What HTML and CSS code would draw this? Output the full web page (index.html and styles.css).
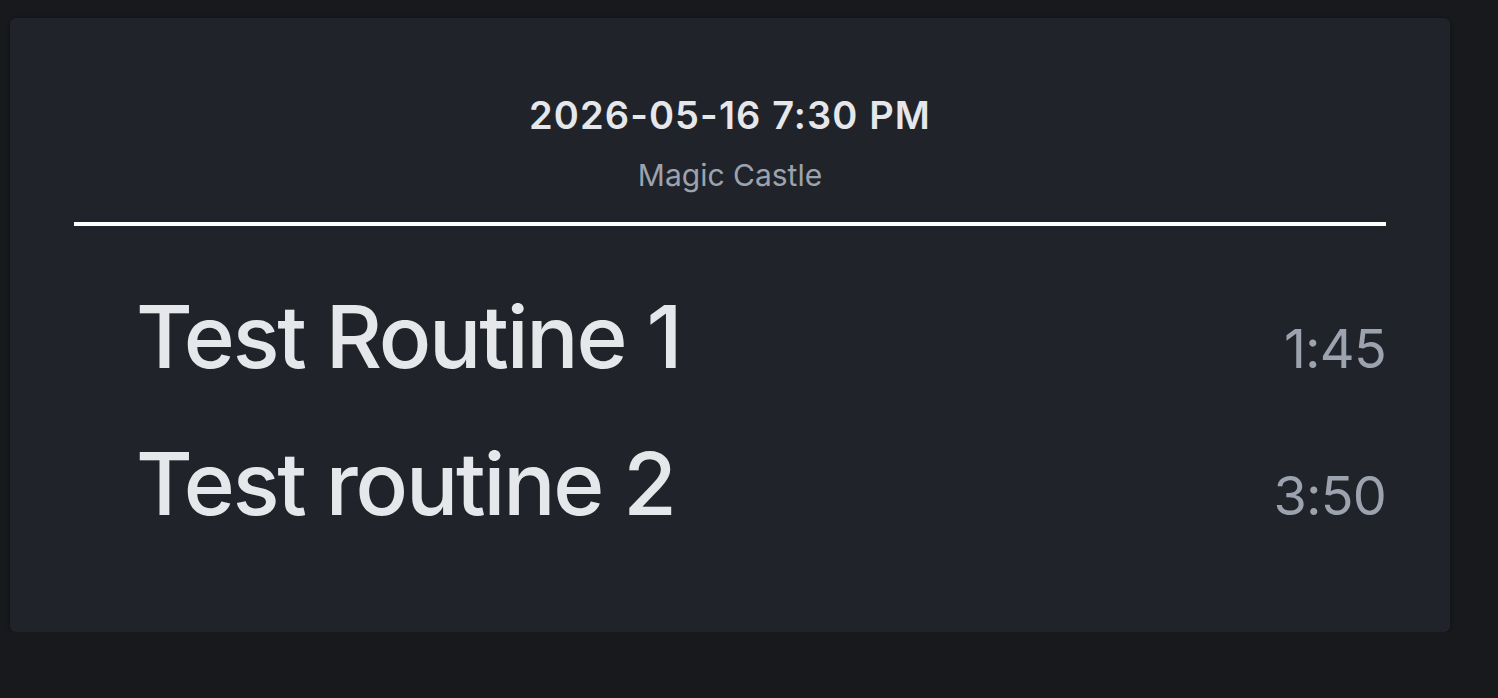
FILE: index.html
```html
<!DOCTYPE html>
<html lang="en">
<head>
<meta charset="utf-8">
<title>Set list</title>
<link rel="stylesheet" href="styles.css">
</head>
<body>
<main class="page">
  <section class="card">
    <header class="card-header">
      <h1 class="show-date">2026-05-16 7:30 PM</h1>
      <p class="venue">Magic Castle</p>
    </header>
    <hr class="divider">
    <ul class="routines">
      <li class="routine">
        <span class="routine-name">Test Routine 1</span>
        <span class="routine-time">1:45</span>
      </li>
      <li class="routine">
        <span class="routine-name">Test routine 2</span>
        <span class="routine-time">3:50</span>
      </li>
    </ul>
  </section>
</main>
</body>
</html>
```
FILE: styles.css
```css
html, body {
  margin: 0;
  padding: 0;
  background: #18191d;
}
body {
  font-family: Inter, "Noto Sans", "Liberation Sans", sans-serif;
  color: #e5e7eb;
}
.page {
  padding: 18px 48px 0 10px;
}
.card {
  background: #20232a;
  border-radius: 6px;
  box-shadow: 0 1px 4px rgba(0, 0, 0, 0.35);
  padding: 75px 64px 105px;
  height: 614px;
  box-sizing: border-box;
}
.card-header {
  display: flex;
  flex-direction: column;
  align-items: center;
}
.show-date {
  margin: 0;
  font-size: 38px;
  line-height: 44px;
  font-weight: 600;
  letter-spacing: 1.1px;
  color: #e5e7eb;
}
.venue {
  margin: 20px 0 0;
  font-size: 30px;
  line-height: 36px;
  color: #9ca3af;
}
.divider {
  margin: 29px 0 0;
  border: 0;
  height: 4px;
  background: #ffffff;
}
.routines {
  list-style: none;
  margin: 67px 0 0;
  padding: 0 0 0 62px;
  display: flex;
  flex-direction: column;
  gap: 60px;
}
.routine {
  display: flex;
  justify-content: space-between;
  align-items: baseline;
}
.routine-name {
  font-size: 87px;
  line-height: 87px;
  font-weight: 500;
  letter-spacing: -2.2px;
  color: #e5e7eb;
}
.routine-time {
  font-size: 54px;
  line-height: 54px;
  letter-spacing: -0.8px;
  color: #9ca3af;
}
```
